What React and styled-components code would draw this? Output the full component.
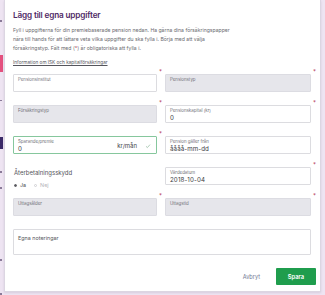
import React from 'react';
import styled, { createGlobalStyle } from 'styled-components';

const Global = createGlobalStyle`
  html, body { margin: 0; padding: 0; }
  body {
    width: 325px; height: 295px; overflow: hidden;
    background: #eee4f2;
    font-family: Inter, "Noto Sans", sans-serif;
  }
`;

const Page = styled.div`
  display: flex;
  height: 295px;
`;

const Strip = styled.div`
  width: 4px;
  flex-shrink: 0;
  display: flex;
  flex-direction: column;
`;

const Mark = styled.div`
  width: ${p => p.$w || 3}px;
  height: ${p => p.$h}px;
  margin-top: ${p => p.$top}px;
  background: ${p => p.$c};
`;

const Modal = styled.div`
  width: 317px;
  height: 292px;
  box-sizing: border-box;
  background: #fff;
  border: 1px solid #dcd6e2;
  border-top: none;
  box-shadow: 0 1px 2px rgba(60, 40, 80, 0.12);
  padding: 9px 9px 0 8px;
  display: flex;
  flex-direction: column;
`;

const Title = styled.h1`
  margin: 0;
  font-size: 8.2px;
  line-height: 12px;
  font-weight: 600;
  color: #4f2a66;
  letter-spacing: -0.15px;
`;

const Intro = styled.div`
  margin-top: 5px;
  display: flex;
  flex-direction: column;
`;

const IntroLine = styled.span`
  font-size: 5.1px;
  line-height: 9px;
  color: #6a6a70;
  white-space: nowrap;
`;

const Req = styled.span`
  color: #b2334f;
`;

const Link = styled.a`
  margin-top: 5px;
  font-size: 4.7px;
  line-height: 9px;
  color: #55555c;
  text-decoration: underline;
  align-self: flex-start;
`;

const Grid = styled.div`
  margin-top: 7px;
  display: grid;
  grid-template-columns: 144px 146px;
  column-gap: 8px;
  row-gap: 13px;
  grid-auto-rows: 18px;
`;

const borders = { normal: '#dcdce0', disabled: '#dcdce2', valid: '#86c79d' };
const bgs = { normal: '#fff', disabled: '#e6e6eb', valid: '#fff' };

const Field = styled.div`
  position: relative;
  box-sizing: border-box;
  height: 18px;
  border: 1px solid ${p => borders[p.$variant || 'normal']};
  background: ${p => bgs[p.$variant || 'normal']};
  border-radius: 1px;
  padding: 2px 4px 0;
  display: flex;
  align-items: flex-start;
  ${p => p.$req && `
    &::after {
      content: '*';
      position: absolute;
      right: -6px;
      top: -6px;
      font-size: 6px;
      line-height: 6px;
      color: #b2334f;
    }
  `}
`;

const FieldText = styled.div`
  display: flex;
  flex-direction: column;
  flex: 1;
`;

const FieldLabel = styled.span`
  font-size: ${p => (p.$big ? 5.4 : 4.4)}px;
  line-height: 6px;
  color: ${p => (p.$big ? '#55555c' : '#707077')};
`;

const FieldValue = styled.span`
  font-size: 6.2px;
  line-height: 8px;
  color: #3a3a40;
  letter-spacing: 0.1px;
`;

const Unit = styled.span`
  align-self: center;
  font-size: 6px;
  color: #44444a;
  margin-right: 8px;
  margin-top: -1px;
`;

const Check = styled.svg`
  align-self: center;
  width: 6px;
  height: 6px;
  margin-right: 1px;
`;

const RadioGroup = styled.div`
  display: flex;
  flex-direction: column;
  padding: 2px 0 0 1px;
`;

const GroupLabel = styled.span`
  font-size: 6px;
  line-height: 8px;
  color: #55555c;
`;

const Options = styled.div`
  display: flex;
  gap: 8px;
  margin-top: 5px;
`;

const Option = styled.label`
  display: flex;
  align-items: center;
  gap: 3px;
  font-size: 5.4px;
  line-height: 7px;
  color: ${p => (p.$on ? '#4a4a50' : '#b4b4ba')};
`;

const Dot = styled.span`
  width: 3px;
  height: 3px;
  border-radius: 50%;
  box-sizing: border-box;
  border: 1px solid ${p => (p.$on ? '#5a5a60' : '#cfcfd4')};
  background: ${p => (p.$on ? '#5a5a60' : 'transparent')};
`;

const Notes = styled(Field)`
  margin-top: 13px;
  height: 26px;
  padding: 5px 4px 0;
`;

const Footer = styled.div`
  margin-top: 13px;
  margin-right: -5px;
  display: flex;
  justify-content: flex-end;
  align-items: center;
  gap: 16px;
`;

const Cancel = styled.button`
  border: none;
  background: none;
  padding: 0;
  font-family: inherit;
  font-size: 5.6px;
  color: #6f7892;
`;

const Save = styled.button`
  width: 40px;
  height: 17px;
  border: none;
  border-radius: 1px;
  background: #1f9d4d;
  color: #fff;
  font-family: inherit;
  font-size: 5.8px;
  font-weight: 600;
  padding: 0;
`;

function TextField({ label, value, variant, req }) {
  return (
    <Field $variant={variant} $req={req}>
      <FieldText>
        <FieldLabel>{label}</FieldLabel>
        {value && <FieldValue>{value}</FieldValue>}
      </FieldText>
    </Field>
  );
}

export default function App() {
  return (
    <>
      <Global />
      <Page>
        <Strip>
          <Mark $top={20} $h={2} $w={2} $c="#8a7a98" />
          <Mark $top={33} $h={17} $c="#e4507e" />
          <Mark $top={28} $h={2} $w={2} $c="#8a7a98" />
          <Mark $top={36} $h={12} $c="#3b2a68" />
          <Mark $top={22} $h={2} $w={2} $c="#8a7a98" />
          <Mark $top={14} $h={2} $w={2} $c="#8a7a98" />
          <Mark $top={70} $h={2} $w={2} $c="#8a7a98" />
          <Mark $top={32} $h={2} $w={2} $c="#8a7a98" />
        </Strip>
        <Modal>
          <Title>Lägg till egna uppgifter</Title>
          <Intro>
            <IntroLine>Fyll i uppgifterna för din premiebaserade pension nedan. Ha gärna dina försäkringspapper</IntroLine>
            <IntroLine>nära till hands för att lättare veta vilka uppgifter du ska fylla i. Börja med att välja</IntroLine>
            <IntroLine>försäkringstyp. Fält med (<Req>*</Req>) är obligatoriska att fylla i.</IntroLine>
          </Intro>
          <Link href="#">Information om ISK och kapitalförsäkringar</Link>
          <Grid>
            <TextField label="Pensionsinstitut" req />
            <TextField label="Pensionstyp" variant="disabled" req />
            <TextField label="Försäkringstyp" variant="disabled" req />
            <TextField label="Pensionskapital (kr)" value="0" req />
            <Field $variant="valid" $req>
              <FieldText>
                <FieldLabel>Sparande/premie</FieldLabel>
                <FieldValue>0</FieldValue>
              </FieldText>
              <Unit>kr/mån</Unit>
              <Check viewBox="0 0 6 6">
                <polyline points="1,3.3 2.4,4.6 5,1.6" fill="none" stroke="#8fb89c" strokeWidth="0.7" />
              </Check>
            </Field>
            <TextField label="Pension gäller från" value="åååå-mm-dd" />
            <RadioGroup>
              <GroupLabel>Återbetalningsskydd</GroupLabel>
              <Options>
                <Option $on><Dot $on />Ja</Option>
                <Option><Dot />Nej</Option>
              </Options>
            </RadioGroup>
            <TextField label="Värdedatum" value="2018-10-04" req />
            <TextField label="Uttagsålder" variant="disabled" req />
            <TextField label="Uttagstid" variant="disabled" req />
          </Grid>
          <Notes>
            <FieldLabel $big>Egna noteringar</FieldLabel>
          </Notes>
          <Footer>
            <Cancel>Avbryt</Cancel>
            <Save>Spara</Save>
          </Footer>
        </Modal>
      </Page>
    </>
  );
}
